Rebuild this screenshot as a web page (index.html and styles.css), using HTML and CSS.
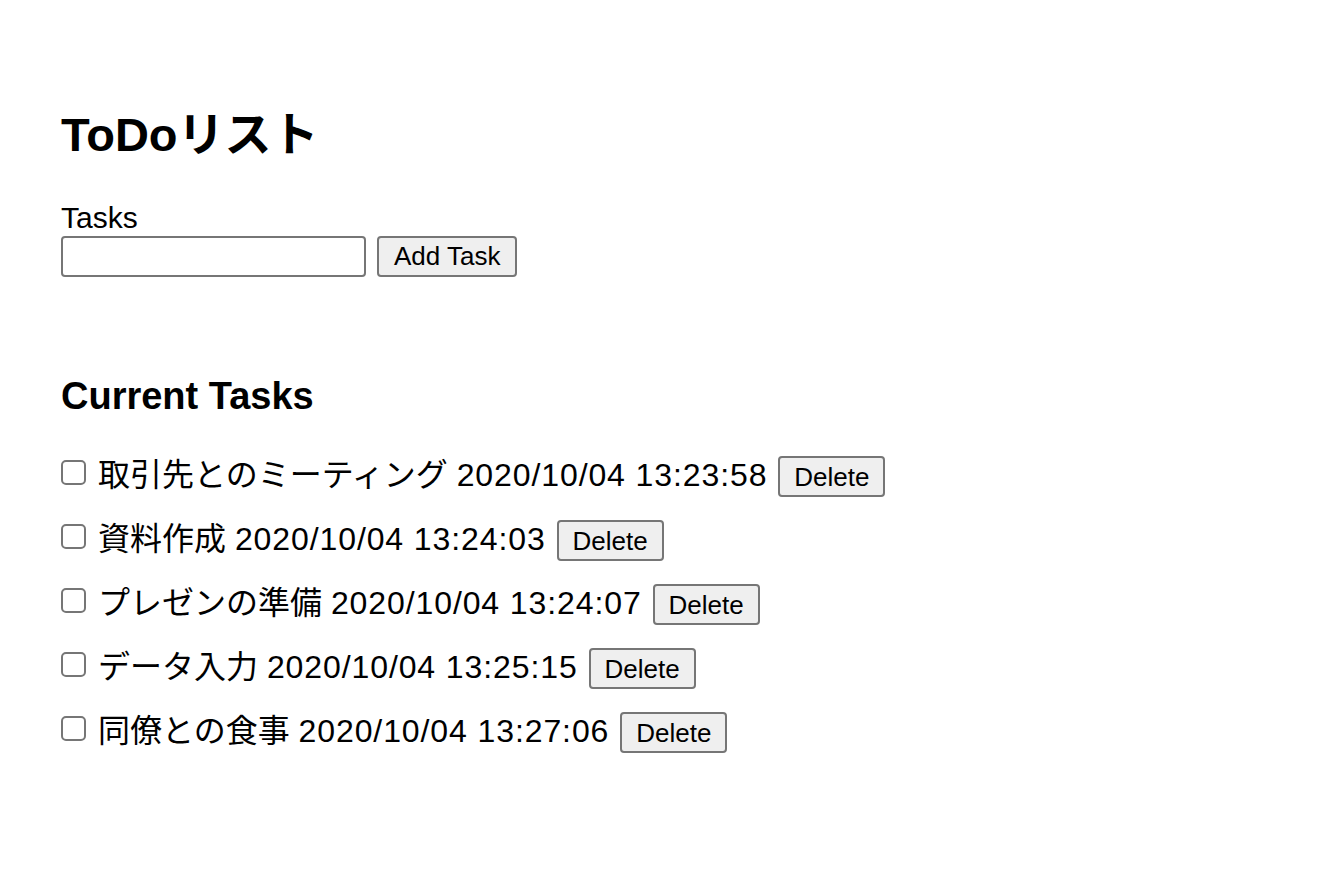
FILE: index.html
```html
<!DOCTYPE html>
<html lang="ja">
<head>
<meta charset="utf-8">
<title>ToDoリスト</title>
<link rel="stylesheet" href="styles.css">
</head>
<body>
<div class="page">
  <h1 class="title">ToDoリスト</h1>
  <form class="add-form">
    <label class="label" for="task">Tasks</label>
    <div class="add-row">
      <input class="text-input" id="task" type="text">
      <button class="btn btn-add" type="button">Add Task</button>
    </div>
  </form>
  <h2 class="subtitle">Current Tasks</h2>
  <ul class="tasks">
    <li class="task"><input class="check" type="checkbox"><span class="name">取引先とのミーティング</span> <span class="time">2020/10/04 13:23:58</span> <button class="btn btn-del" type="button">Delete</button></li>
    <li class="task"><input class="check" type="checkbox"><span class="name">資料作成</span> <span class="time">2020/10/04 13:24:03</span> <button class="btn btn-del" type="button">Delete</button></li>
    <li class="task"><input class="check" type="checkbox"><span class="name">プレゼンの準備</span> <span class="time">2020/10/04 13:24:07</span> <button class="btn btn-del" type="button">Delete</button></li>
    <li class="task"><input class="check" type="checkbox"><span class="name">データ入力</span> <span class="time">2020/10/04 13:25:15</span> <button class="btn btn-del" type="button">Delete</button></li>
    <li class="task"><input class="check" type="checkbox"><span class="name">同僚との食事</span> <span class="time">2020/10/04 13:27:06</span> <button class="btn btn-del" type="button">Delete</button></li>
  </ul>
</div>
</body>
</html>
```

FILE: styles.css
```css
html, body {
  margin: 0;
  padding: 0;
  background: #ffffff;
}

body {
  font-family: "Liberation Sans", "Noto Sans CJK JP", sans-serif;
  color: #000000;
}

.page {
  padding: 107px 0 0 61px;
}

.title {
  margin: 0;
  font-size: 47px;
  line-height: 56px;
  font-weight: 700;
}

.add-form {
  margin: 38px 0 0 0;
}

.label {
  display: block;
  font-size: 30px;
  line-height: 34px;
}

.add-row {
  display: flex;
  gap: 11px;
  margin-top: 1px;
}

.text-input {
  box-sizing: border-box;
  width: 305px;
  height: 41px;
  margin: 0;
  border: 2px solid #767676;
  border-radius: 4px;
  background: #ffffff;
  font-size: 26px;
  padding: 0 4px;
}

.btn {
  box-sizing: border-box;
  margin: 0;
  border: 2px solid #767676;
  border-radius: 4px;
  background: #efefef;
  color: #000000;
  font-family: "Liberation Sans", sans-serif;
  font-size: 26px;
  padding: 0 14px;
}

.btn-add {
  height: 41px;
  line-height: 36px;
  padding: 0 15px 1px;
}

.subtitle {
  margin: 97px 0 0 0;
  font-size: 38px;
  line-height: 44px;
  font-weight: 700;
}

.tasks {
  list-style: none;
  margin: 25px 0 0 0;
  padding: 0;
}

.task {
  font-size: 32px;
  line-height: 64px;
  white-space: nowrap;
}

.check {
  -webkit-appearance: none;
  appearance: none;
  box-sizing: border-box;
  display: inline-block;
  vertical-align: top;
  width: 25px;
  height: 25px;
  margin: 17px 12px 0 0;
  border: 2px solid #767676;
  border-radius: 5px;
  background: #ffffff;
}

.time {
  letter-spacing: 0.9px;
}

.btn-del {
  display: inline-block;
  height: 41px;
  line-height: 36px;
  padding: 1px 14px 0;
  margin-left: 2px;
}
```
